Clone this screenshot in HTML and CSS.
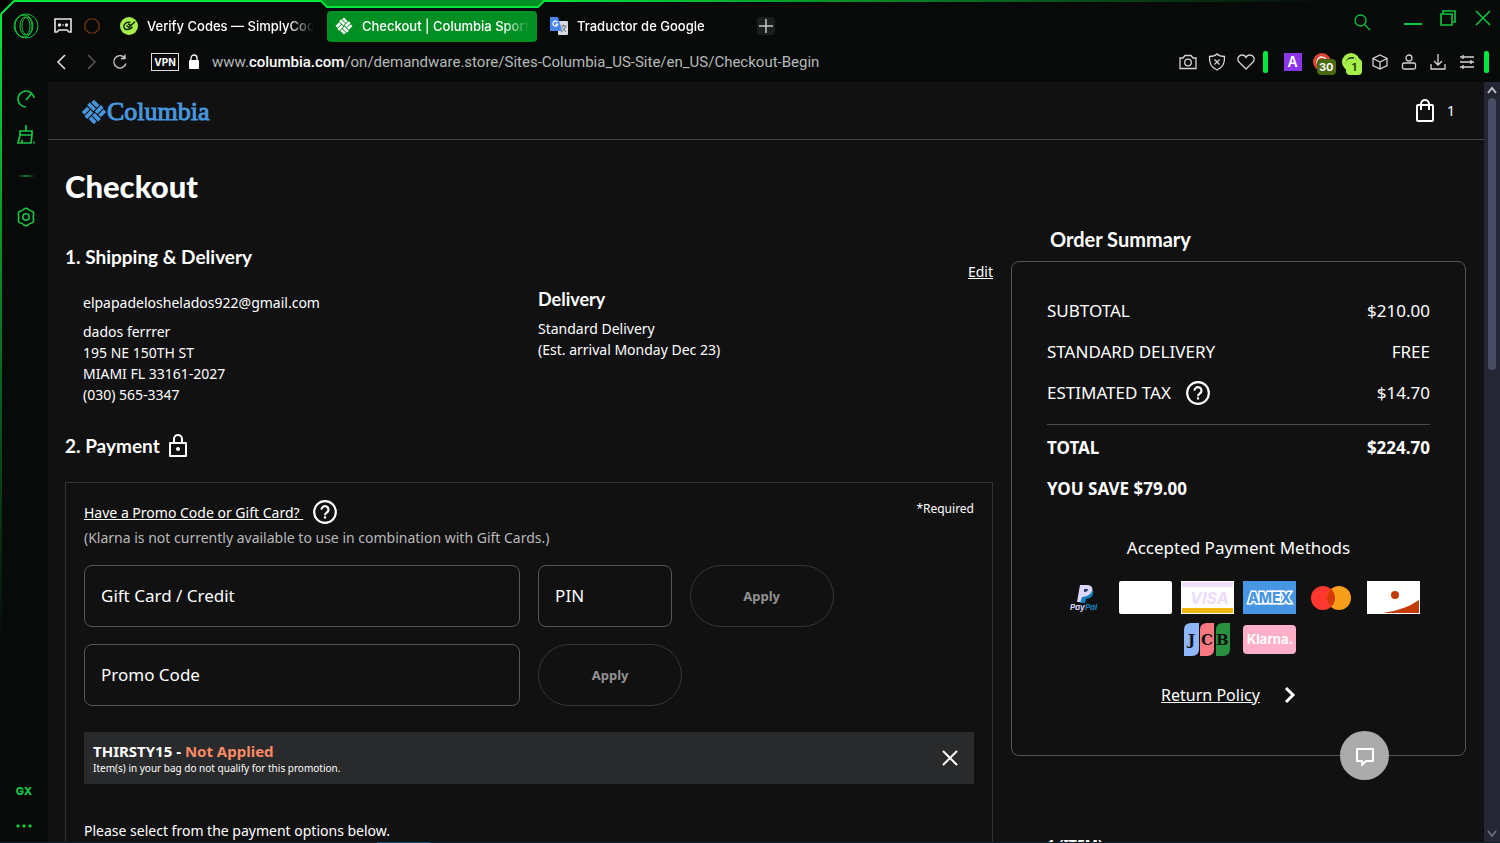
FILE: index.html
```html
<!DOCTYPE html>
<html lang="en">
<head>
    <meta charset="UTF-8">
    <meta name="viewport" content="width=device-width, initial-scale=1.0">
    <title>Checkout | Columbia Sportswear</title>
    <link rel="stylesheet" href="styles.css">
</head>
<body>

<svg class="sprite" width="0" height="0" aria-hidden="true">
    <symbol id="gem" viewBox="0 0 24 24">
        <g transform="rotate(45 12 12)" fill="currentColor">
            <rect x="4" y="4" width="7" height="3.500"/>
            <rect x="3" y="8.500" width="8" height="3.500"/>
            <rect x="12" y="3" width="3.500" height="8"/>
            <rect x="16.500" y="4" width="3.500" height="7"/>
            <rect x="13" y="12" width="8" height="3.500"/>
            <rect x="13" y="16.500" width="7" height="3.500"/>
            <rect x="4" y="13" width="3.500" height="7"/>
            <rect x="8.500" y="13" width="3.500" height="8"/>
        </g>
    </symbol>
    <symbol id="help" viewBox="0 0 24 24">
        <circle cx="12" cy="12" r="10" fill="none" stroke="currentColor" stroke-width="2"/>
        <path d="M8.800 9.800a3.200 3.200 0 1 1 5 2.600c-1.100 .8-1.800 1.300-1.800 2.600" fill="none" stroke="currentColor" stroke-width="2"/>
        <rect x="11" y="16" width="2" height="2" fill="currentColor"/>
    </symbol>
</svg>

<!-- window frame -->
<svg class="frame" width="1500" height="843" fill="none" aria-hidden="true">
    <defs>
        <linearGradient id="fade-x" gradientUnits="userSpaceOnUse" x1="540" y1="0" x2="1320" y2="0">
            <stop offset="0" stop-color="#04e63c"/>
            <stop offset="1" stop-color="#04e63c" stop-opacity="0"/>
        </linearGradient>
        <linearGradient id="fade-y" gradientUnits="userSpaceOnUse" x1="0" y1="14" x2="0" y2="640">
            <stop offset="0" stop-color="#04e63c"/>
            <stop offset="1" stop-color="#04e63c" stop-opacity="0"/>
        </linearGradient>
    </defs>
    <path d="M0 0H14L0 14Z" fill="#000"/>
    <path d="M321 0H544L539 6H327Z" fill="#008f22"/>
    <path d="M1 14L14 1H321L327 7H538L544 1" stroke="#04e63c" stroke-width="2"/>
    <path d="M543 0H1320V2H543Z" fill="url(#fade-x)"/>
    <path d="M0 14H2V640H0Z" fill="url(#fade-y)"/>
</svg>

<div class="titlebar">
    <button class="opera" aria-label="Opera menu">
        <svg width="26" height="26" viewBox="0 0 26 26" fill="none" stroke="#0fc43c">
            <circle cx="13" cy="13" r="12"/>
            <ellipse cx="11" cy="13" rx="9" ry="11"/>
            <ellipse cx="14" cy="13" rx="5" ry="9"/>
            <ellipse cx="12" cy="13" rx="5" ry="9"/>
        </svg>
    </button>
    <button class="pin" aria-label="GX Corner">
        <svg width="18" height="16" viewBox="0 0 18 16">
            <path d="M1 1H17V14H15L13 12H5L3 14H1Z" fill="none" stroke="#e8e8e8" stroke-width="1.600"/>
            <circle cx="5.500" cy="7" r="1.700" fill="#e8e8e8"/>
            <circle cx="12.500" cy="7" r="1.700" fill="#e8e8e8"/>
            <path d="M8 7H10" stroke="#e8e8e8"/>
        </svg>
    </button>
    <button class="pin" aria-label="Workspace">
        <svg width="16" height="16" viewBox="0 0 16 16">
            <path d="M5 1H11L15 5V11L11 15H5L1 11V5Z" fill="none" stroke="#7d3510" stroke-width="1.200"/>
        </svg>
    </button>
    <nav class="tabs">
        <a class="tab" href="#">
            <svg width="18" height="18" viewBox="0 0 18 18">
                <circle cx="9" cy="9" r="9" fill="#a6f04a"/>
                <path d="M10.500 5.500C6 4.500 3 7.500 4 10.500C5 13.500 10 13 12.500 10" fill="none" stroke="#15250a" stroke-width="1.500"/>
                <path d="M6.500 8.500L9 10.500L15 4.500M8 7L11 8.500" fill="none" stroke="#15250a" stroke-width="1.500"/>
            </svg>
            <span>Verify Codes — SimplyCodes</span>
        </a>
        <a class="tab active" href="#">
            <svg width="18" height="18"><use href="#gem"/></svg>
            <span>Checkout | Columbia Sportswear</span>
        </a>
        <a class="tab" href="#">
            <svg width="18" height="18" viewBox="0 0 18 18">
                <rect x="8" y="4" width="10" height="14" rx="1" fill="#d9dce0"/>
                <path d="M10.500 9H16.500M13.500 7.500V9M15.500 9C15 12 13 14 11 15M12 10.500L16 15" stroke="#69727c" fill="none"/>
                <path d="M1 0H8L12 14H1Q0 14 0 13V1Q0 0 1 0Z" fill="#4a86f0"/>
                <path d="M7.500 5.200A2.500 2.500 0 1 0 7.800 7.200H5.500" fill="none" stroke="#fff" stroke-width="1.200"/>
            </svg>
            <span>Traductor de Google</span>
        </a>
        <button class="new-tab" aria-label="New tab">
            <svg width="18" height="18" viewBox="0 0 18 18"><path d="M9 2V16M2 9H16" stroke="#c8c8c8" stroke-width="1.500"/></svg>
        </button>
    </nav>
    <div class="window-buttons">
        <button aria-label="Search tabs">
            <svg width="18" height="18" viewBox="0 0 18 18" fill="none" stroke="#10c93e" stroke-width="1.300"><circle cx="7.500" cy="7.500" r="5.500"/><path d="M11.500 11.500L17 17"/></svg>
        </button>
        <button aria-label="Minimize">
            <svg width="18" height="18" viewBox="0 0 18 18"><path d="M0 14H18" stroke="#10c93e" stroke-width="2"/></svg>
        </button>
        <button aria-label="Restore">
            <svg width="18" height="18" viewBox="0 0 18 18" fill="none" stroke="#10c93e" stroke-width="1.600"><path d="M2 4H13V15H2Z"/><path d="M4 3V1H16V12H14"/></svg>
        </button>
        <button aria-label="Close">
            <svg width="18" height="18" viewBox="0 0 18 18"><path d="M2 1L16 15M16 1L2 15" stroke="#10c93e" stroke-width="1.500"/></svg>
        </button>
    </div>
</div>

<div class="addressbar">
    <div class="nav-buttons">
        <button aria-label="Back"><svg width="16" height="16" viewBox="0 0 16 16"><path d="M11 1L4 8L11 15" fill="none" stroke="#e6e6e6" stroke-width="1.500"/></svg></button>
        <button aria-label="Forward" disabled><svg width="16" height="16" viewBox="0 0 16 16"><path d="M5 1L12 8L5 15" fill="none" stroke="#565656" stroke-width="1.500"/></svg></button>
        <button aria-label="Reload"><svg width="16" height="16" viewBox="0 0 16 16"><path d="M14 9.500A6.200 6.200 0 1 1 12.500 3.500M13 0.500V4.500H9" fill="none" stroke="#d0d0d0" stroke-width="1.300"/></svg></button>
    </div>
    <button class="vpn">VPN</button>
    <svg class="secure" width="12" height="16" viewBox="0 0 12 16"><rect x="1" y="6" width="10" height="9" rx="1" fill="#fff"/><path d="M3 7V4a3 3 0 0 1 6 0V7" fill="none" stroke="#fff" stroke-width="1.300"/></svg>
    <p class="url">www.<b>columbia.com</b>/on/demandware.store/Sites-Columbia_US-Site/en_US/Checkout-Begin</p>
    <div class="extensions">
        <button aria-label="Snapshot"><svg width="18" height="16" viewBox="0 0 18 16" fill="none" stroke="#d4d4d4" stroke-width="1.300"><path d="M1 4H4L6 1.500H12L14 4H17V14.500H1Z"/><circle cx="9" cy="8.500" r="3.300"/></svg></button>
        <button aria-label="Ad blocker"><svg width="18" height="18" viewBox="0 0 18 18" fill="none" stroke="#d4d4d4" stroke-width="1.300"><path d="M9 1C11 3 13.500 3.500 16.500 3.500C17 10 15 14.500 9 17C3 14.500 1 10 1.500 3.500C4.500 3.500 7 3 9 1Z"/><path d="M6.500 6.500L11.500 11.500M11.500 6.500L6.500 11.500"/></svg></button>
        <button aria-label="Favorite"><svg width="18" height="16" viewBox="0 0 18 16" fill="none" stroke="#d4d4d4" stroke-width="1.300"><path d="M9 15L2 8C-0.500 5 1.500 1 5 1C7 1 8.300 2 9 3.500C9.700 2 11 1 13 1C16.500 1 18.500 5 16 8Z"/></svg></button>
        <i class="marker spaced"></i>
        <button aria-label="Extension A"><span class="ext-a">A</span></button>
        <button class="badged" aria-label="Blocker, 30 items"><svg width="18" height="18" viewBox="0 0 18 18"><circle cx="9" cy="9" r="9" fill="#e04432"/><path d="M13 6A5 5 0 1 0 13 12" fill="none" stroke="#fff" stroke-width="1.300"/></svg><span class="badge olive">30</span></button>
        <button class="badged" aria-label="Coupons, 1 item"><svg width="18" height="18" viewBox="0 0 18 18"><circle cx="9" cy="9" r="9" fill="#a6f04a"/><path d="M12 5C6 4 4 8 4.500 11M6 9L9 10L14 6" fill="none" stroke="#15250a" stroke-width="1.500"/></svg><span class="badge lime">1</span></button>
        <button aria-label="Extensions"><svg width="16" height="16" viewBox="0 0 16 16" fill="none" stroke="#d4d4d4" stroke-width="1.300"><path d="M8 1L15 4.500V11.500L8 15L1 11.500V4.500ZM1 4.500L8 8L15 4.500M8 8V15"/></svg></button>
        <button aria-label="Profile"><svg width="16" height="16" viewBox="0 0 16 16" fill="none" stroke="#d4d4d4" stroke-width="1.300"><circle cx="8" cy="4" r="3"/><rect x="1.500" y="9" width="13" height="6" rx="1.500"/></svg></button>
        <button aria-label="Downloads"><svg width="16" height="16" viewBox="0 0 16 16" fill="none" stroke="#d4d4d4" stroke-width="1.300"><path d="M8 0V11M4 7L8 11L12 7M1 10V15H15V10"/></svg></button>
        <button aria-label="Easy setup"><svg width="16" height="16" viewBox="0 0 16 16" fill="none" stroke="#d4d4d4" stroke-width="1.300"><path d="M1 3H15M1 8H15M1 13H15M4 1V5M12 6V10M4 11V15"/></svg></button>
        <i class="marker"></i>
    </div>
</div>

<div class="workspace">
    <aside class="sidebar">
        <button aria-label="GX Control"><svg width="20" height="20" viewBox="0 0 20 20" fill="none" stroke="#17c444" stroke-width="1.700"><path d="M10 18A8 8 0 1 1 18 9M10 11L16 4"/></svg></button>
        <button aria-label="GX Cleaner"><svg width="20" height="20" viewBox="0 0 20 20" fill="none" stroke="#17c444" stroke-width="1.700"><path d="M10 0V6M4 6H16V10H4ZM4 10L2 18H15L16 10M6 15V18"/><circle cx="18" cy="17.500" r="1" fill="#17c444" stroke="none"/></svg></button>
        <span class="divider"></span>
        <button aria-label="Settings"><svg width="20" height="20" viewBox="0 0 20 20" fill="none" stroke="#17c444" stroke-width="1.600"><path d="M8 2Q10 0.500 12 2Q13.500 3.800 15.500 4Q18 4.500 17.600 7.500Q17 10 17.600 12.500Q18 15.500 15.500 16Q13.500 16.200 12 18Q10 19.500 8 18Q6.500 16.200 4.500 16Q2 15.500 2.400 12.500Q3 10 2.400 7.500Q2 4.500 4.500 4Q6.500 3.800 8 2Z"/><circle cx="10" cy="10" r="3.200"/></svg></button>
        <button class="gx">GX</button>
        <button class="more" aria-label="More"><svg width="16" height="4" viewBox="0 0 16 4" fill="#17c444"><circle cx="2" cy="2" r="1.700"/><circle cx="8" cy="2" r="1.700"/><circle cx="14" cy="2" r="1.700"/></svg></button>
    </aside>

    <div class="page">
        <header class="site-header">
            <a class="logo" href="#"><svg width="26" height="26"><use href="#gem"/></svg>Columbia</a>
            <a class="bag" href="#" aria-label="Bag, 1 item">
                <svg width="20" height="24" viewBox="0 0 20 24" fill="none" stroke="#fff" stroke-width="2"><rect x="2" y="6" width="16" height="16" rx="1"/><path d="M6 11V5a4 4 0 0 1 8 0V11"/></svg>
                <span>1</span>
            </a>
        </header>

        <main class="checkout">
            <div class="steps">
                <h1>Checkout</h1>

                <section>
                    <div class="step-head">
                        <h2>1. Shipping &amp; Delivery</h2>
                        <a href="#">Edit</a>
                    </div>
                    <div class="shipping">
                        <div class="address">
                            <p>elpapadeloshelados922@gmail.com</p>
                            <address>
                                dados ferrrer<br>
                                195 NE 150TH ST<br>
                                MIAMI FL 33161-2027<br>
                                (030) 565-3347
                            </address>
                        </div>
                        <div class="delivery">
                            <h3>Delivery</h3>
                            <p>Standard Delivery<br>(Est. arrival Monday Dec 23)</p>
                        </div>
                    </div>
                </section>

                <section>
                    <h2 class="payment-title">2. Payment
                        <svg width="18" height="24" viewBox="0 0 18 24"><path d="M1 9H17V22H1Z" fill="none" stroke="#fff" stroke-width="2" stroke-linejoin="round"/><path d="M5 9V5a4 4 0 0 1 8 0V9" fill="none" stroke="#fff" stroke-width="2"/><circle cx="9" cy="15" r="2" fill="#fff"/></svg>
                    </h2>
                    <div class="payment">
                        <div class="promo-head">
                            <a href="#">Have a Promo Code or Gift Card?&nbsp;</a>
                            <svg width="26" height="26"><use href="#help"/></svg>
                            <span class="required">*Required</span>
                        </div>
                        <p class="note">(Klarna is not currently available to use in combination with Gift Cards.)</p>
                        <form>
                            <div class="form-row">
                                <div class="field wide"><input type="text" id="giftCard"><label for="giftCard">Gift Card / Credit</label></div>
                                <div class="field pin-code"><input type="text" id="pin"><label for="pin">PIN</label></div>
                                <button type="button" class="apply">Apply</button>
                            </div>
                            <div class="form-row">
                                <div class="field wide"><input type="text" id="promoCode"><label for="promoCode">Promo Code</label></div>
                                <button type="button" class="apply">Apply</button>
                            </div>
                        </form>
                        <div class="coupon">
                            <div>
                                <strong>THIRSTY15 - <span>Not Applied</span></strong>
                                <p>Item(s) in your bag do not qualify for this promotion.</p>
                            </div>
                            <button aria-label="Remove promotion"><svg width="16" height="16" viewBox="0 0 16 16"><path d="M1 1L15 15M15 1L1 15" stroke="#fff" stroke-width="2"/></svg></button>
                        </div>
                        <p class="options">Please select from the payment options below.</p>
                    </div>
                </section>
            </div>

            <div class="summary">
                <h2>Order Summary</h2>
                <div class="summary-box">
                    <dl>
                        <div><dt>SUBTOTAL</dt><dd>$210.00</dd></div>
                        <div><dt>STANDARD DELIVERY</dt><dd>FREE</dd></div>
                        <div><dt>ESTIMATED TAX <svg width="26" height="26"><use href="#help"/></svg></dt><dd>$14.70</dd></div>
                        <div class="total"><dt>TOTAL</dt><dd>$224.70</dd></div>
                    </dl>
                    <p class="save">YOU SAVE $79.00</p>
                    <p class="accepted">Accepted Payment Methods</p>
                    <div class="cards">
                        <svg viewBox="0 0 53 33">
                            <path d="M23 4H31Q37 5 35 11Q33 16 27 16L26 21H20Z" fill="#ddd6fa"/>
                            <path d="M36 8Q38 17 29 18L28 22H23L25 16Q33 16 36 8Z" fill="#1580bd"/>
                            <path d="M27 8H31Q31 11 27 11Z" fill="#24366b"/>
                            <text x="13" y="29" font-size="8" font-weight="700" font-style="italic" fill="#ddd6fa">Pay<tspan fill="#1580bd">Pal</tspan></text>
                        </svg>
                        <svg viewBox="0 0 53 33"><rect width="53" height="33" rx="2" fill="#fff"/></svg>
                        <svg viewBox="0 0 53 33">
                            <rect width="53" height="33" fill="#fff"/>
                            <rect x="1" y="1" width="51" height="5" fill="#f0defb"/>
                            <rect x="1" y="27" width="51" height="5" fill="#edb50f"/>
                            <text x="9" y="23" font-size="16" font-weight="700" font-style="italic" fill="#ecdcfb">VISA</text>
                        </svg>
                        <svg viewBox="0 0 53 33">
                            <rect width="53" height="33" fill="#4796e3"/>
                            <text x="5" y="22" font-size="14" font-weight="800" fill="#4796e3" stroke="#fff" stroke-width="3" paint-order="stroke">AMEX</text>
                        </svg>
                        <svg viewBox="0 0 53 33">
                            <circle cx="18" cy="17" r="12" fill="#ff382f"/>
                            <circle cx="34" cy="17" r="12" fill="#f89e1b"/>
                            <path d="M26 8A12 12 0 0 1 26 26A12 12 0 0 1 26 8Z" fill="#d53a04"/>
                        </svg>
                        <svg viewBox="0 0 53 33">
                            <rect width="53" height="33" fill="#fff"/>
                            <circle cx="28" cy="14" r="4" fill="#c43a05"/>
                            <path d="M16 32Q38 29 52 19V32Z" fill="#c43a05"/>
                        </svg>
                        <svg viewBox="0 0 53 33">
                            <path d="M3 7Q3 0 10 0H18V26Q18 33 11 33H3Z" fill="#8fb5fb"/>
                            <path d="M19 7Q19 0 26 0H33V26Q33 33 26 33H19Z" fill="#fb7880"/>
                            <path d="M35 7Q35 0 42 0H49V26Q49 33 42 33H35Z" fill="#28903f"/>
                            <g class="jcb"><text x="7" y="22">J</text><text x="20" y="22">C</text><text x="35" y="22">B</text></g>
                        </svg>
                        <svg viewBox="0 0 53 33">
                            <rect y="2" width="53" height="29" rx="4" fill="#ffb0c8"/>
                            <text x="4" y="21" font-size="13" font-weight="700" fill="#fff">Klarna.</text>
                        </svg>
                    </div>
                    <div class="returns">
                        <a href="#">Return Policy</a>
                        <svg width="24" height="24" viewBox="0 0 24 24"><path d="M8 5L15 12L8 19" fill="none" stroke="#fff" stroke-width="3"/></svg>
                    </div>
                </div>
                <p class="items">1 (ITEM)</p>
            </div>
        </main>
        <button class="chat" aria-label="Chat">
            <svg width="20" height="20" viewBox="0 0 20 20"><path d="M2 3H18V15H11L7 19V15H2Z" fill="none" stroke="#fff" stroke-width="2" stroke-linejoin="round"/></svg>
        </button>
    </div>

    <div class="scrollbar">
        <svg width="10" height="8" viewBox="0 0 10 8"><path d="M1 7L5 2L9 7" fill="none" stroke="#c3c3cc" stroke-width="2"/></svg>
        <span class="thumb"></span>
        <svg width="10" height="8" viewBox="0 0 10 8"><path d="M1 1L5 6L9 1" fill="none" stroke="#6c6c7c" stroke-width="2"/></svg>
    </div>
</div>
<div class="taskbar"><span></span></div>

</body>
</html>
```
FILE: styles.css
```css
* {
    box-sizing: border-box;
}
body {
    margin: 0;
    height: 100vh;
    display: flex;
    flex-direction: column;
    overflow: hidden;
    background-color: #080a0a;
    color: #fff;
    font-family: "Noto Sans", "Open Sans", sans-serif;
    font-size: 14px;
    line-height: 21px;
}
h1, h2, h3, p, dl, dd {
    margin: 0;
}
a {
    color: #fff;
}
svg {
    display: block;
    flex: none;
}
button {
    display: grid;
    place-items: center;
    padding: 0;
    border: none;
    background: none;
    color: #fff;
    font-family: inherit;
    cursor: pointer;
}
.sprite {
    position: absolute;
}
.frame {
    position: absolute;
    top: 0;
    left: 0;
    pointer-events: none;
}

/* browser chrome */
.titlebar {
    display: flex;
    align-items: center;
    height: 43px;
    padding: 9px 8px 0 13px;
    font-family: Inter, sans-serif;
}
.opera {
    margin-right: 15px;
}
.pin {
    margin-right: 12px;
}
.tabs {
    display: flex;
    align-items: center;
    gap: 5px;
    flex: 1;
}
.tab {
    display: flex;
    align-items: center;
    gap: 9px;
    width: 210px;
    height: 31px;
    padding: 0 8px;
    border-radius: 4px;
    text-decoration: none;
    font-size: 13px;
    font-weight: 500;
}
.tab span {
    flex: 1;
    overflow: hidden;
    white-space: nowrap;
    mask-image: linear-gradient(to right, #000 85%, transparent);
}
.tab.active {
    background-color: #008f22;
}
.new-tab {
    border-radius: 4px;
    background-color: #1b1e1e;
}
.window-buttons {
    display: flex;
    gap: 17px;
    align-self: flex-start;
    margin-top: -3px;
}
.window-buttons button:first-child {
    margin: 7px 16px 0 0;
}
.addressbar {
    display: flex;
    align-items: center;
    height: 39px;
    padding: 0 8px 1px 54px;
    font-family: Inter, sans-serif;
}
.nav-buttons {
    display: flex;
    gap: 13px;
}
.vpn {
    width: 28px;
    height: 18px;
    margin-left: 23px;
    border: 1px solid #ddd;
    font-size: 10px;
    font-weight: 700;
}
.secure {
    margin: 0 12px 0 9px;
}
.url {
    flex: 1;
    color: #b5bab8;
    font-family: Roboto, sans-serif;
    font-size: 15px;
    white-space: nowrap;
}
.url b {
    color: #fff;
    font-weight: 500;
}
.extensions {
    display: flex;
    align-items: center;
}
.extensions button {
    width: 29px;
    height: 24px;
}
.marker {
    width: 5px;
    height: 22px;
    margin: 0 3px;
    border-radius: 2px;
    background-color: #04e63c;
}
.marker.spaced {
    margin-right: 10px;
}
.ext-a {
    width: 18px;
    height: 18px;
    background-color: #8a35ea;
    font-size: 14px;
    font-weight: 600;
    line-height: 18px;
}
.badged {
    position: relative;
}
.badge {
    position: absolute;
    left: 10px;
    top: 9px;
    min-width: 16px;
    height: 16px;
    padding: 0 2px;
    border-radius: 4px;
    font-size: 11px;
    font-weight: 700;
    line-height: 16px;
}
.olive {
    background-color: #48690d;
}
.lime {
    background-color: #a6f04a;
    color: #2c4a10;
}
.workspace {
    display: flex;
    flex: 1;
    min-height: 0;
}
.sidebar {
    display: flex;
    flex-direction: column;
    align-items: center;
    width: 48px;
    padding: 7px 0 14px 4px;
    gap: 16px;
}
.divider {
    width: 18px;
    height: 2px;
    margin: 14px 0;
    background: linear-gradient(to right, transparent, #107a2c, transparent);
}
.gx {
    margin: auto 4px 10px 0;
    color: #17c444;
    font-family: Inter, sans-serif;
    font-size: 11px;
    font-weight: 800;
}
.more {
    margin: 0 4px 0 0;
}
.scrollbar {
    display: flex;
    flex-direction: column;
    align-items: center;
    width: 16px;
    padding: 4px 0;
    background-color: #242633;
}
.thumb {
    width: 8px;
    height: 272px;
    margin: 4px 0 auto;
    border-radius: 4px;
    background-color: #484c64;
}
.taskbar {
    height: 1px;
    padding-left: 377px;
    background-color: #08202f;
}
.taskbar span {
    display: block;
    width: 53px;
    height: 1px;
    background-color: #0f4d7a;
}

/* store page */
.page {
    position: relative;
    flex: 1;
    overflow: hidden;
    background-color: #111;
}
.site-header {
    display: flex;
    align-items: center;
    justify-content: space-between;
    height: 58px;
    padding: 0 29px 0 33px;
    border-bottom: 1px solid #474747;
}
.logo {
    display: flex;
    align-items: center;
    padding-top: 2px;
    color: #4796dc;
    font-family: "Liberation Serif", serif;
    font-size: 26px;
    text-decoration: none;
    -webkit-text-stroke: 1px #4796dc;
}
.bag {
    display: flex;
    align-items: center;
    gap: 12px;
    text-decoration: none;
}
.checkout {
    display: grid;
    grid-template-columns: 1fr 455px;
    gap: 18px;
    padding: 0 18px 0 17px;
}
h1, h2, h3 {
    font-family: Lato, sans-serif;
}
h1 {
    margin: 27px 0 40px;
    font-size: 31px;
    font-weight: 900;
    line-height: 38px;
}
h2 {
    font-size: 19px;
    line-height: 24px;
}
h3 {
    font-size: 18px;
    line-height: 24px;
}
.step-head {
    display: flex;
    justify-content: space-between;
    height: 37px;
}
.step-head a {
    align-self: flex-end;
}
.shipping {
    display: grid;
    grid-template-columns: 1fr 1fr;
    padding-left: 18px;
}
.address {
    padding-top: 10px;
}
.address p {
    margin-bottom: 8px;
}
address {
    font-style: normal;
}
.delivery {
    padding-top: 5px;
}
.delivery h3 {
    margin-bottom: 7px;
}
.payment-title {
    display: flex;
    align-items: center;
    gap: 9px;
    margin: 29px 0 24px;
}
.payment {
    min-height: 400px;
    padding: 16px 18px;
    border: 1px solid #333;
}
.promo-head {
    display: flex;
    align-items: center;
    gap: 9px;
}
.required {
    align-self: flex-start;
    margin-left: auto;
    font-size: 12px;
    line-height: 19px;
}
.note {
    margin: 2px 0 17px;
    color: #b9b9b9;
}
.form-row {
    display: flex;
    gap: 18px;
    margin-bottom: 17px;
}
.field {
    position: relative;
}
.field input {
    width: 100%;
    height: 62px;
    padding: 0 17px;
    border: 1px solid #555;
    border-radius: 8px;
    background: none;
    color: #fff;
    font: inherit;
}
.field label {
    position: absolute;
    left: 17px;
    top: 20px;
    font-size: 17px;
}
.wide {
    width: 49%;
}
.pin-code {
    width: 15%;
}
.apply {
    width: 144px;
    height: 62px;
    border: 1px solid #363636;
    border-radius: 31px;
    color: #919191;
    font-size: 13px;
    font-weight: 700;
}
.coupon {
    display: flex;
    align-items: center;
    justify-content: space-between;
    margin-top: 26px;
    padding: 9px 16px 9px 9px;
    background-color: #292a2b;
}
.coupon strong span {
    color: #f98a66;
}
.coupon strong {
    display: block;
    font-size: 15px;
    line-height: 20px;
}
.coupon p {
    font-size: 10px;
    line-height: 14px;
}
.options {
    margin-top: 36px;
}
.summary {
    padding-top: 87px;
}
.summary h2 {
    margin: 0 0 10px 39px;
    font-size: 20px;
}
.summary-box {
    padding: 28px 35px 48px;
    border: 1px solid #555;
    border-radius: 8px;
    font-size: 17px;
}
.summary-box dl div {
    display: flex;
    justify-content: space-between;
    line-height: 41px;
}
.summary-box dt {
    display: flex;
    align-items: center;
    gap: 14px;
}
.summary-box .total {
    margin-top: 11px;
    padding-top: 2px;
    border-top: 1px solid #4c4c4c;
    font-weight: 700;
}
.save {
    font-weight: 700;
    line-height: 41px;
}
.accepted {
    margin: 27px 0 21px;
    line-height: 24px;
    text-align: center;
}
.cards {
    display: flex;
    flex-wrap: wrap;
    justify-content: center;
    gap: 9px;
    font-family: Inter, sans-serif;
}
.cards svg {
    width: 53px;
    height: 33px;
}
.jcb {
    font-family: "DejaVu Serif", serif;
    font-size: 15px;
    font-weight: 700;
    fill: #111;
}
.returns {
    display: flex;
    align-items: center;
    justify-content: center;
    gap: 18px;
    margin-top: 27px;
    padding-right: 14px;
    font-size: 16px;
}
.items {
    margin: 78px 36px 0;
    font-weight: 700;
}
.chat {
    position: absolute;
    right: 95px;
    bottom: 62px;
    width: 49px;
    height: 49px;
    border-radius: 50%;
    background-color: #ababab;
}
```
